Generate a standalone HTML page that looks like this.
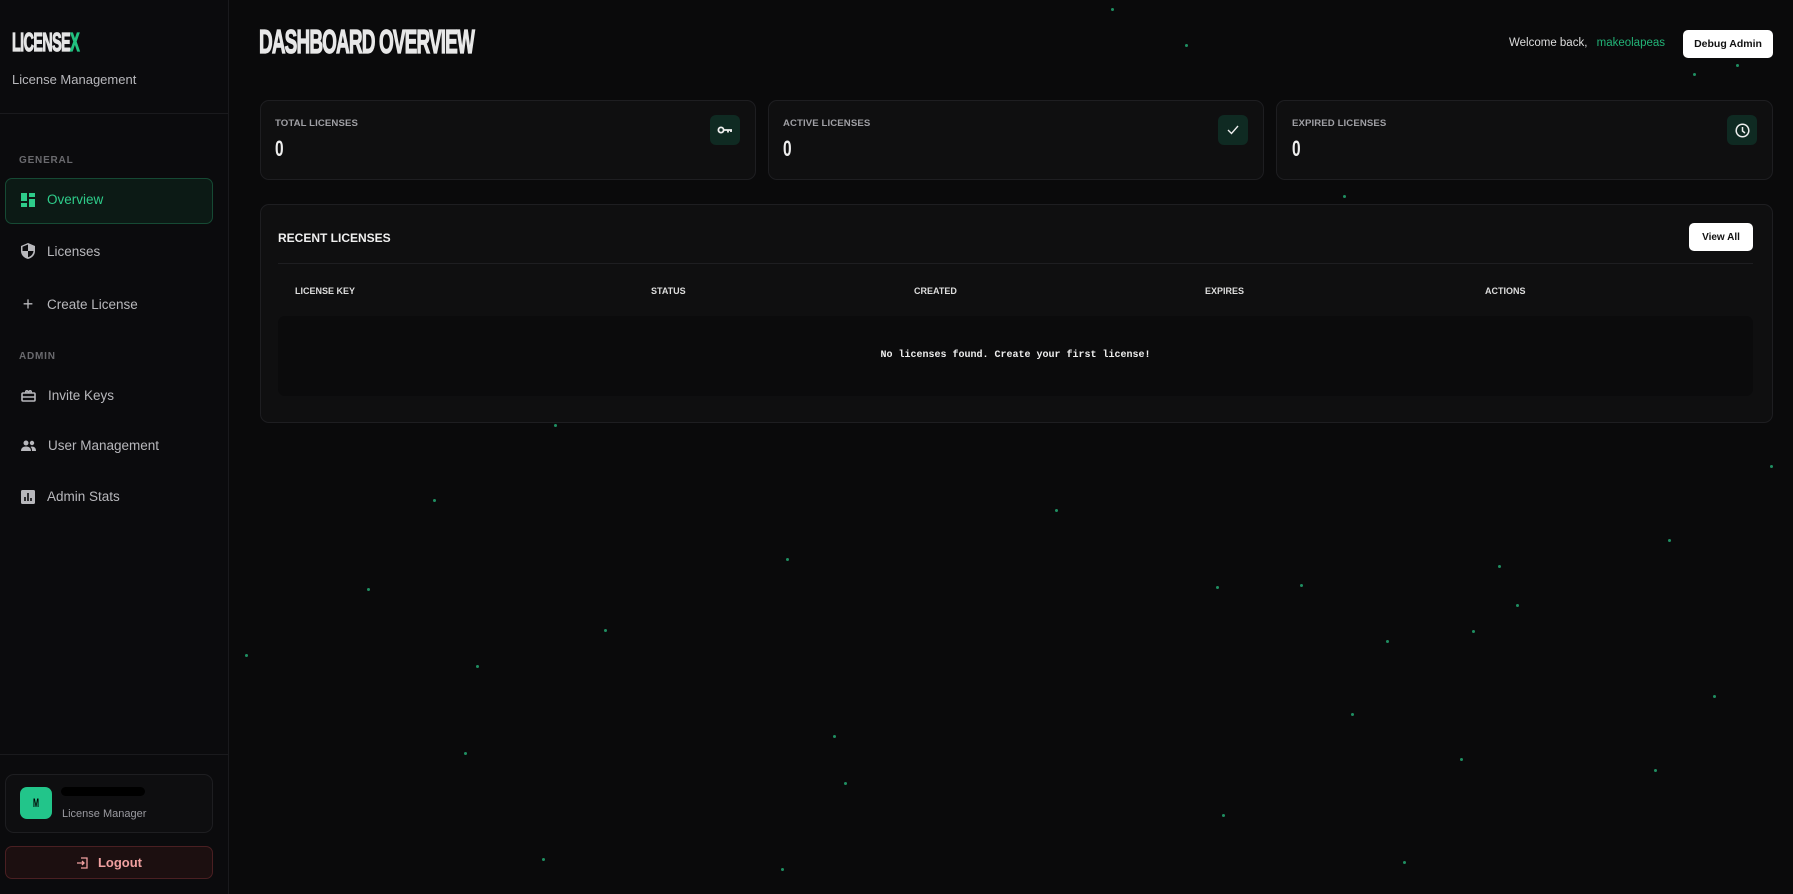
<!DOCTYPE html>
<html><head><meta charset="utf-8"><style>
*{box-sizing:border-box;margin:0;padding:0}
body{width:1793px;height:894px;background:#0a0a0b;font-family:"Liberation Sans",sans-serif;color:#e5e5e5;position:relative;overflow:hidden}
.a{position:absolute}
.side{left:0;top:0;width:229px;height:894px;background:#0b0b0d;border-right:1px solid #1a1a1d}
.cond{display:inline-block;font-weight:900;transform-origin:left center;letter-spacing:-1px;-webkit-text-stroke:1.2px currentColor}
.nav{left:21px;font-size:13.5px;color:#b8b8bc;display:flex;align-items:center;gap:12px}
.sec{left:19px;font-size:10px;font-weight:bold;color:#6a6a6e;letter-spacing:.8px}
.card{background:#0f0f10;border:1px solid #1e1e21;border-radius:9px}
.lbl{font-size:9.6px;font-weight:bold;color:#a0a0a5;letter-spacing:.1px}
.num{font-size:22px;font-weight:bold;color:#eee;transform:scaleX(.7);transform-origin:left}
.ib{width:30px;height:30px;border-radius:6px;background:#0f2a22;display:flex;align-items:center;justify-content:center}
.th{font-size:9px;font-weight:bold;color:#ddd;top:286px}
.dot{width:3px;height:3px;border-radius:50%;background:#1f8f62}
</style></head><body>
<div class="a side"></div>
<div class="a" style="left:12px;top:28px;font-size:26px;line-height:28px"><span class="cond" style="transform:scaleX(.55)">LICENSE<span style="color:#22c07f">X</span></span></div>
<div class="a" style="left:12px;top:72px;font-size:13px;color:#b8b8bc">License Management</div>
<div class="a" style="left:0;top:113px;width:228px;height:1px;background:#1a1a1d"></div>
<div class="a sec" style="top:155px">GENERAL</div>
<div class="a" style="left:5px;top:178px;width:208px;height:46px;border-radius:7px;background:#0c1a15;border:1px solid #164a34"></div>
<div class="a nav" style="top:192px;color:#2ecc8a"><svg width="14" height="14" viewBox="0 0 14 14" fill="#2ecc8a"><rect x="0" y="0" width="6" height="8"/><rect x="8" y="0" width="6" height="4"/><rect x="0" y="10" width="6" height="4"/><rect x="8" y="6" width="6" height="8"/></svg>Overview</div>
<div class="a nav" style="top:243px"><svg width="14" height="16" viewBox="0 0 14 16"><path d="M7 0L0 3v5c0 4 3 7 7 8 4-1 7-4 7-8V3z" fill="#b8b8bc"/><path d="M7 1.5V8H1.5v-4.3z M7 8h5.5c-.3 3-2.5 5.3-5.5 6.3z" fill="#0b0b0d"/></svg>Licenses</div>
<div class="a nav" style="top:294px"><span style="font-size:18px;width:14px;text-align:center">+</span>Create License</div>
<div class="a sec" style="top:351px">ADMIN</div>
<div class="a nav" style="top:388px"><svg width="15" height="13" viewBox="0 0 15 13" fill="none" stroke="#b8b8bc" stroke-width="1.6"><rect x="1" y="4" width="13" height="8" rx="1"/><path d="M1 8h13M5 4c-1-3 2-3 2.5 0M10 4c1-3-2-3-2.5 0"/></svg>Invite Keys</div>
<div class="a nav" style="top:438px"><svg width="15" height="11" viewBox="0 0 15 11" fill="#b8b8bc"><circle cx="5" cy="3" r="2.5"/><circle cx="11" cy="3" r="2.2"/><path d="M0 11c0-3 2-4.5 5-4.5s5 1.5 5 4.5zM10.5 6.5c3 0 4.5 1.5 4.5 4.5h-4c0-2-.2-3-1.5-4z"/></svg>User Management</div>
<div class="a nav" style="top:489px"><svg width="14" height="14" viewBox="0 0 14 14"><rect width="14" height="14" rx="1.5" fill="#b8b8bc"/><path d="M4 11V7M7 11V3M10 11V8" stroke="#0b0b0d" stroke-width="1.6"/></svg>Admin Stats</div>
<div class="a" style="left:0;top:754px;width:228px;height:1px;background:#1a1a1d"></div>
<div class="a card" style="left:5px;top:774px;width:208px;height:59px;background:#0e0e10"></div>
<div class="a" style="left:20px;top:787px;width:32px;height:32px;border-radius:7px;background:#22c58a;color:#000;font-size:12px;font-weight:900;display:flex;align-items:center;justify-content:center"><span style="transform:scaleX(.6)">M</span></div>
<div class="a" style="left:61px;top:787px;width:84px;height:9px;border-radius:5px;background:#000"></div>
<div class="a" style="left:62px;top:808px;font-size:11px;color:#9a9aa0">License Manager</div>
<div class="a" style="left:5px;top:846px;width:208px;height:33px;border-radius:7px;background:#1c0f10;border:1px solid #4a1f22;display:flex;align-items:center;justify-content:center;gap:10px;color:#f0a0a0;font-size:13px;font-weight:bold"><svg width="12" height="12" viewBox="0 0 12 12" fill="none" stroke="#f0a0a0" stroke-width="1.3"><path d="M5 1h6v10H5M1 6h7M6 4l2 2-2 2"/></svg>Logout</div>

<div class="a" style="left:259px;top:25px;font-size:33px;line-height:34px;color:#e8e8e8"><span class="cond" style="transform:scaleX(.575);letter-spacing:-1.5px">DASHBOARD OVERVIEW</span></div>
<div class="a" style="left:1509px;top:37px;font-size:11.5px;color:#ddd">Welcome back, <span style="color:#22b377;margin-left:6px">makeolapeas</span></div>
<div class="a" style="left:1683px;top:30px;width:90px;height:28px;border-radius:5px;background:#fff;color:#111;font-size:10.5px;font-weight:bold;display:flex;align-items:center;justify-content:center">Debug Admin</div>

<div class="a card" style="left:260px;top:100px;width:496px;height:80px"></div>
<div class="a card" style="left:768px;top:100px;width:496px;height:80px"></div>
<div class="a card" style="left:1276px;top:100px;width:497px;height:80px"></div>
<div class="a lbl" style="left:275px;top:118px">TOTAL LICENSES</div>
<div class="a lbl" style="left:783px;top:118px">ACTIVE LICENSES</div>
<div class="a lbl" style="left:1292px;top:118px">EXPIRED LICENSES</div>
<div class="a num" style="left:275px;top:136px">0</div>
<div class="a num" style="left:783px;top:136px">0</div>
<div class="a num" style="left:1292px;top:136px">0</div>
<div class="a ib" style="left:710px;top:115px"><svg width="16" height="8" viewBox="0 0 16 8" fill="none" stroke="#eee" stroke-width="1.8"><circle cx="4" cy="4" r="2.6"/><path d="M7 4h8M11 4v2.5M14 4v2"/></svg></div>
<div class="a ib" style="left:1218px;top:115px"><svg width="12" height="10" viewBox="0 0 12 10" fill="none" stroke="#eee" stroke-width="1.4"><path d="M1 5l3.5 3.5L11 1"/></svg></div>
<div class="a ib" style="left:1727px;top:115px"><svg width="15" height="15" viewBox="0 0 15 15" fill="none" stroke="#eee" stroke-width="1.5"><circle cx="7.5" cy="7.5" r="6.3"/><path d="M7.5 4v4l2.5 2"/></svg></div>

<div class="a card" style="left:260px;top:204px;width:1513px;height:219px"></div>
<div class="a" style="left:278px;top:231px;font-size:12px;font-weight:bold;color:#f0f0f0">RECENT LICENSES</div>
<div class="a" style="left:1689px;top:223px;width:64px;height:28px;border-radius:5px;background:#fff;color:#111;font-size:10px;font-weight:bold;display:flex;align-items:center;justify-content:center">View All</div>
<div class="a" style="left:278px;top:263px;width:1475px;height:1px;background:#1e1e21"></div>
<div class="a th" style="left:295px">LICENSE KEY</div>
<div class="a th" style="left:651px">STATUS</div>
<div class="a th" style="left:914px">CREATED</div>
<div class="a th" style="left:1205px">EXPIRES</div>
<div class="a th" style="left:1485px">ACTIONS</div>
<div class="a" style="left:278px;top:316px;width:1475px;height:80px;border-radius:7px;background:#0b0b0c"></div>
<div class="a" style="left:278px;top:350px;width:1475px;text-align:center;font-family:'Liberation Mono',monospace;font-size:10px;font-weight:bold;color:#eee">No licenses found. Create your first license!</div>

<div class="a dot" style="left:1111px;top:8px"></div><div class="a dot" style="left:1185px;top:44px"></div>
<div class="a dot" style="left:1693px;top:73px"></div><div class="a dot" style="left:1736px;top:64px"></div>
<div class="a dot" style="left:1343px;top:195px"></div><div class="a dot" style="left:1770px;top:465px"></div>
<div class="a dot" style="left:1055px;top:509px"></div><div class="a dot" style="left:786px;top:558px"></div>
<div class="a dot" style="left:1668px;top:539px"></div><div class="a dot" style="left:1498px;top:565px"></div>
<div class="a dot" style="left:1216px;top:586px"></div><div class="a dot" style="left:1300px;top:584px"></div>
<div class="a dot" style="left:1516px;top:604px"></div><div class="a dot" style="left:604px;top:629px"></div>
<div class="a dot" style="left:1472px;top:630px"></div><div class="a dot" style="left:1386px;top:640px"></div>
<div class="a dot" style="left:245px;top:654px"></div><div class="a dot" style="left:476px;top:665px"></div>
<div class="a dot" style="left:1713px;top:695px"></div><div class="a dot" style="left:1351px;top:713px"></div>
<div class="a dot" style="left:833px;top:735px"></div><div class="a dot" style="left:1460px;top:758px"></div>
<div class="a dot" style="left:1654px;top:769px"></div><div class="a dot" style="left:844px;top:782px"></div>
<div class="a dot" style="left:1222px;top:814px"></div><div class="a dot" style="left:542px;top:858px"></div>
<div class="a dot" style="left:1403px;top:861px"></div><div class="a dot" style="left:781px;top:868px"></div>
<div class="a dot" style="left:367px;top:588px"></div><div class="a dot" style="left:433px;top:499px"></div>
<div class="a dot" style="left:464px;top:752px"></div><div class="a dot" style="left:554px;top:424px"></div>
</body></html>
